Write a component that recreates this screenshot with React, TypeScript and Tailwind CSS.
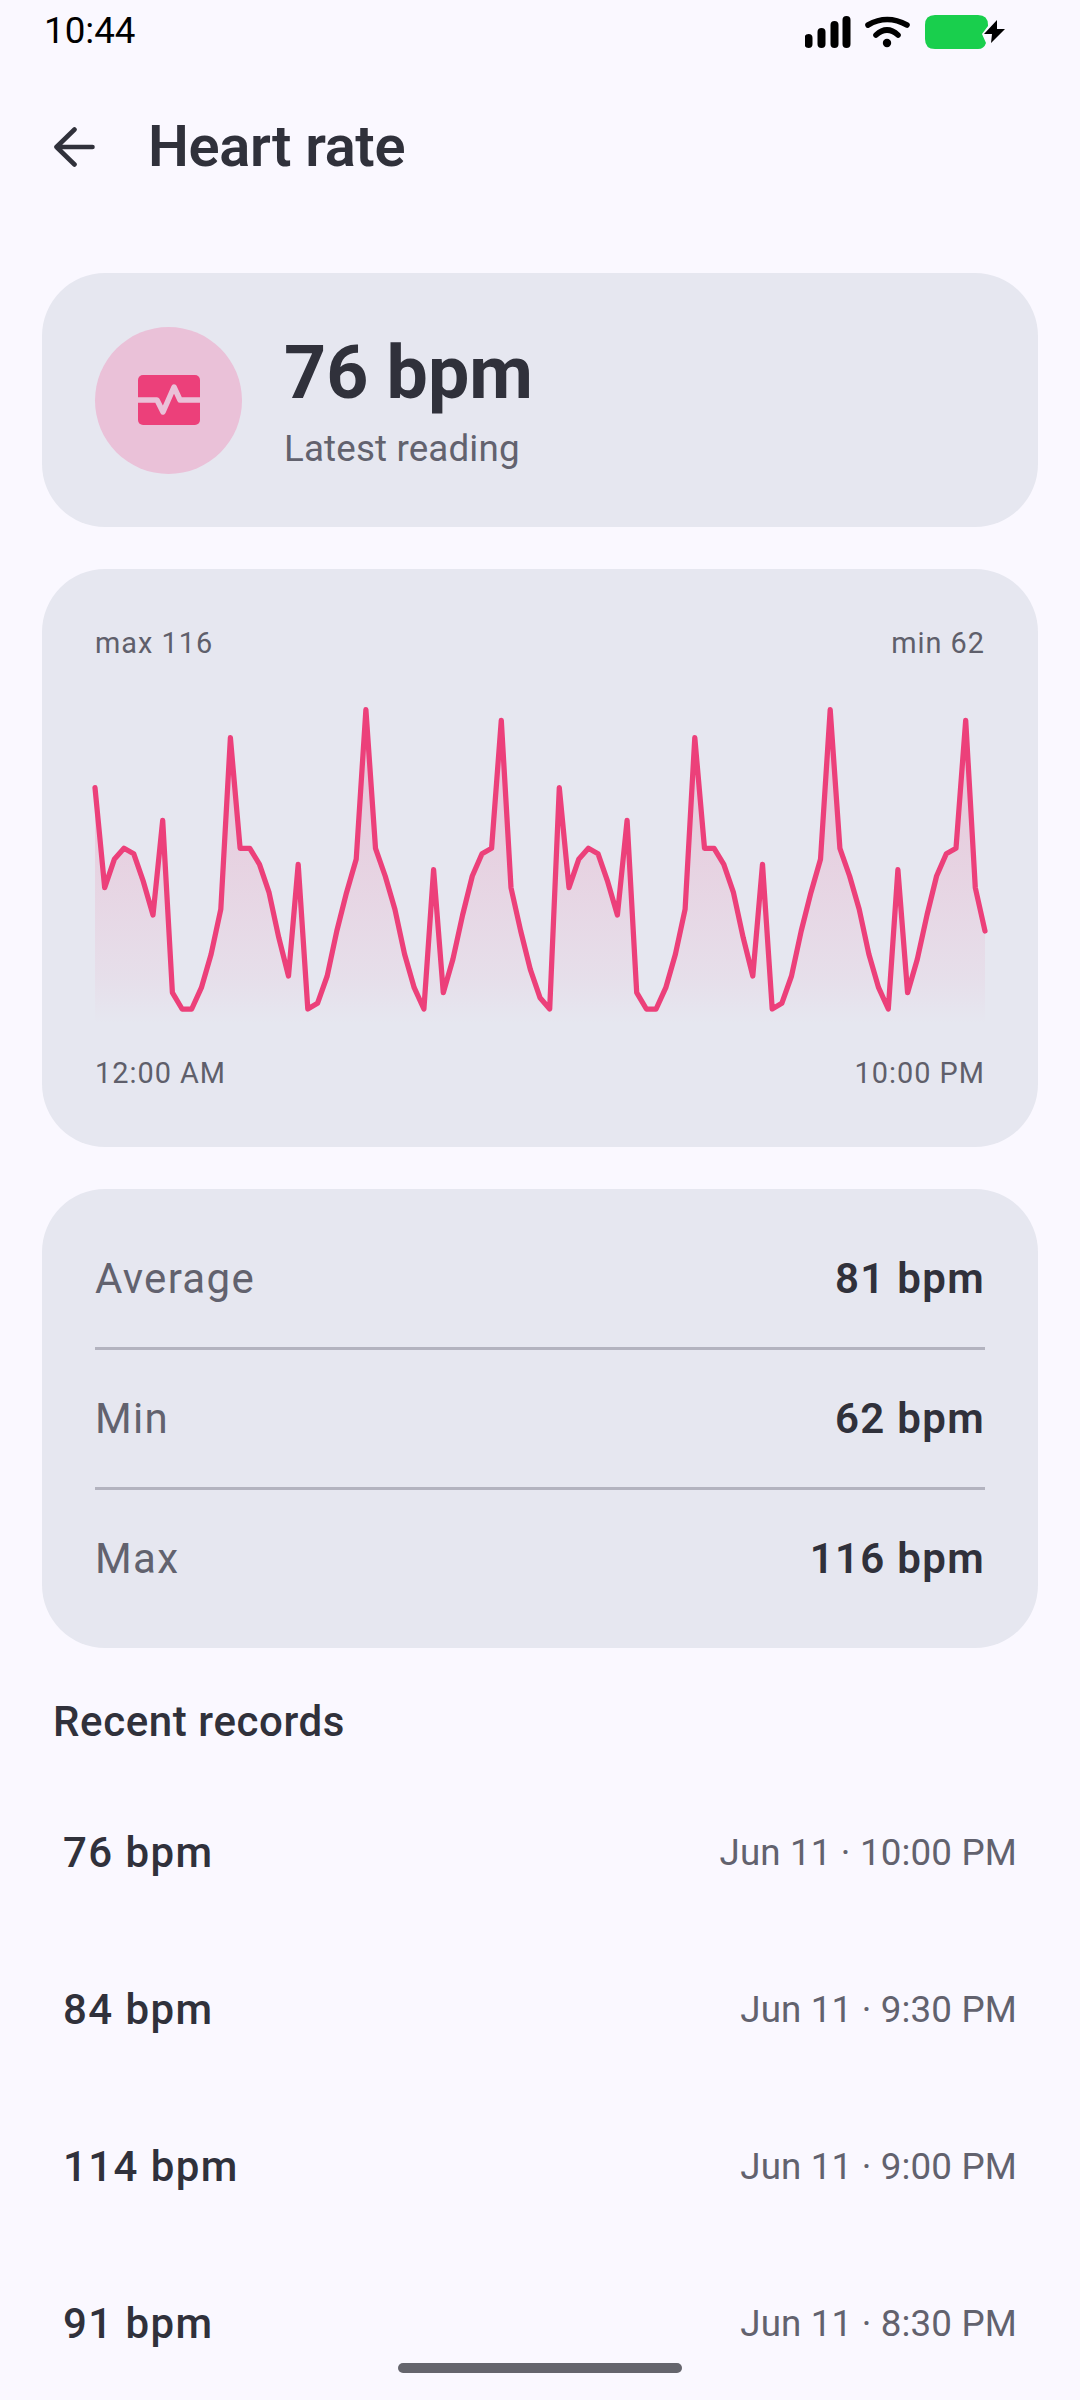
const base = [560,860,775,742,758,842,942,658,1175,1224,1224,1160,1060,925,410,742,742,790,875,1010,1125,790,1224,1207,1125,990,875,775,326,742,825,925,1060,1160,1224,806,1175,1075,942,825,758,742,358,860,990,1105,1190,1224];
const vals = [...base, ...base.slice(0, 45)];
const W = 890;
const H = 290;
const pts = vals.map((v, i) => [(i * W) / 92, v / 3 + 600 - 733]);
const line = pts.map((p) => p[0].toFixed(1) + "," + p[1].toFixed(1)).join(" ");
const area = "0," + H + " " + line + " " + W + "," + H;

function Stat({ label, value, last }: { label: string; value: string; last?: boolean }) {
  return (
    <div className={last ? "flex h-[140px] items-center justify-between border-b-[3px] border-transparent" : "flex h-[140px] items-center justify-between border-b-[3px] border-[#b3b3bf]"}>
      <span className="text-[42px] tracking-[1.31px] text-[#62626e]">{label}</span>
      <span className="text-[42px] font-semibold tracking-[1.31px] text-[#30313b]">{value}</span>
    </div>
  );
}

function Rec({ v, d }: { v: string; d: string }) {
  return (
    <div className="flex h-[157px] items-center justify-between pl-[21px]">
      <span className="text-[42px] font-medium tracking-[1.4px] text-[#30313b]">{v}</span>
      <span className="text-[36.75px] tracking-[0.15px] text-[#62626e]">{d}</span>
    </div>
  );
}

export default function App() {
  return (
    <div className="relative h-[2400px] w-[1080px] overflow-hidden bg-[#faf8ff] font-['Roboto',sans-serif]">
      <div className="flex h-[63px] items-center justify-between pl-[44px] pr-[75px]">
        <span className="text-[36.75px] leading-none text-black">10:44</span>
        <svg width="200" height="34" viewBox="0 0 200 34" className="shrink-0">
          <g fill="black">
            <rect x="-0.5" y="19" width="8" height="14" rx="4" />
            <rect x="12.5" y="13" width="8" height="20" rx="4" />
            <rect x="25.5" y="6" width="8" height="27" rx="4" />
            <rect x="37.5" y="1" width="8" height="32" rx="4" />
            <circle cx="82" cy="28" r="4.2" />
          </g>
          <g fill="none" stroke="black" strokeWidth="5.6" strokeLinecap="round">
            <path d="M63 10 Q82 -1 102 10" />
            <path d="M71 20 Q82 10 93 20" />
          </g>
          <path d="M130 0H173Q183 0 183 10V11L177 19L181 28Q179 34 173 34H130Q120 34 120 24V10Q120 0 130 0Z" fill="#19cf4d" />
          <path d="M192 5L179 19H187L186 28L200 14H192Z" fill="black" />
        </svg>
      </div>

      <div className="flex h-[168px] items-center pl-[54px]">
        <svg width="41" height="40" viewBox="0 0 41 40" fill="none" stroke="#30313b" strokeWidth="4.6" strokeLinecap="round" strokeLinejoin="round">
          <path d="M20.5 2.5L2.5 20L20.5 37.5M2.5 20H38.5" />
        </svg>
        <span className="ml-[53px] text-[57.75px] font-semibold leading-none tracking-[-0.3px] text-[#30313b]">Heart rate</span>
      </div>

      <div className="flex flex-col gap-[42px] px-[42px] pt-[42px]">
        <div className="flex h-[254px] items-center rounded-[63px] bg-[#e6e7f0] pl-[53px]">
          <div className="flex h-[147px] w-[147px] items-center justify-center rounded-full bg-[#eac1d8]">
            <svg width="62" height="50" viewBox="0 0 62 50">
              <rect width="62" height="50" rx="5" fill="#ec407a" />
              <path d="M0 25H19L25 37L36 12L42 25H62" fill="none" stroke="#eac1d8" strokeWidth="5.5" strokeLinejoin="round" />
            </svg>
          </div>
          <div className="ml-[42px] flex flex-col pt-[3px]">
            <span className="text-[73.5px] font-bold leading-[86px] text-[#30313b]">76 bpm</span>
            <span className="mt-[9px] text-[36.75px] leading-[48px] tracking-[0.15px] text-[#62626e]">Latest reading</span>
          </div>
        </div>

        <div className="flex h-[578px] flex-col rounded-[63px] bg-[#e6e7f0] px-[53px] pt-[58px]">
          <div className="flex items-center justify-between text-[28.875px] font-[450] leading-[33px] tracking-[1px] text-[#5f5f6b]">
            <span>max 116</span>
            <span>min 62</span>
          </div>
          <svg width={W} height={H} viewBox={"0 0 " + W + " " + H} className="mt-[74px] shrink-0 overflow-visible">
            <defs>
              <linearGradient id="fade" x1="0" y1="0" x2="0" y2="1">
                <stop offset="0" stopColor="#ec407a" stopOpacity="0.22" />
                <stop offset="0.85" stopColor="#ec407a" stopOpacity="0.05" />
                <stop offset="1" stopColor="#ec407a" stopOpacity="0" />
              </linearGradient>
            </defs>
            <polygon points={area} fill="url(#fade)" />
            <polyline points={line} fill="none" stroke="#ec407a" strokeWidth="5.25" strokeLinecap="round" strokeLinejoin="round" />
          </svg>
          <div className="mt-[33px] flex items-center justify-between text-[28.875px] font-[450] leading-[33px] tracking-[1px] text-[#5f5f6b]">
            <span>12:00 AM</span>
            <span>10:00 PM</span>
          </div>
        </div>

        <div className="flex h-[459px] flex-col rounded-[63px] bg-[#e6e7f0] px-[53px] pt-[21px]">
          <Stat label="Average" value="81 bpm" />
          <Stat label="Min" value="62 bpm" />
          <Stat label="Max" value="116 bpm" last />
        </div>
      </div>

      <div className="px-[53px] pt-[49px] text-[42px] font-medium leading-[50px] tracking-[0.6px] text-[#30313b]">Recent records</div>
      <div className="pl-[42px] pr-[63px] pt-[27px]">
        <Rec v="76 bpm" d="Jun 11 · 10:00 PM" />
        <Rec v="84 bpm" d="Jun 11 · 9:30 PM" />
        <Rec v="114 bpm" d="Jun 11 · 9:00 PM" />
        <Rec v="91 bpm" d="Jun 11 · 8:30 PM" />
      </div>

      <div className="absolute bottom-[27px] left-[398px] h-[10px] w-[284px] rounded-full bg-[#65656d]" />
    </div>
  );
}
